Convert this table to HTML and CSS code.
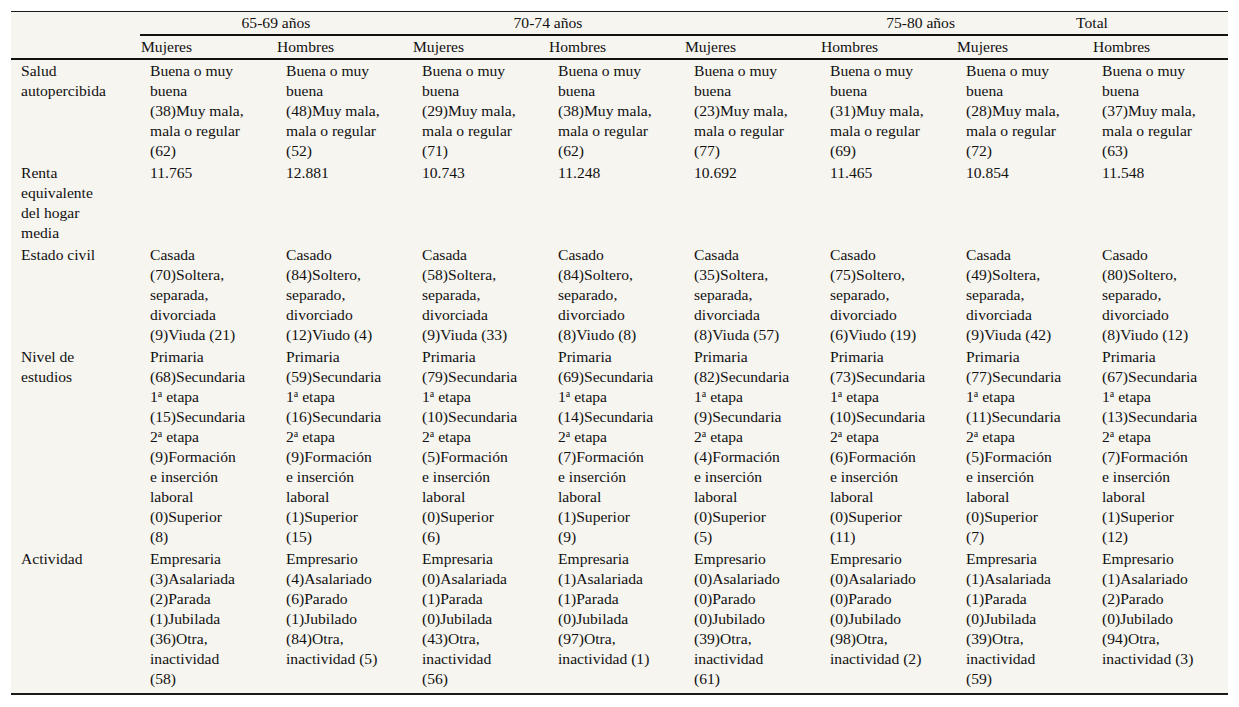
FILE: index.html
```html
<!DOCTYPE html>
<html lang="es">
<head>
<meta charset="utf-8">
<title>Tabla</title>
<link rel="stylesheet" href="styles.css">
</head>
<body>
<div class="page">
<table class="data">
<colgroup>
<col class="c-label">
<col class="c-data"><col class="c-data"><col class="c-data"><col class="c-data">
<col class="c-data"><col class="c-data"><col class="c-data"><col class="c-data">
</colgroup>
<thead>
<tr class="groups">
<th rowspan="2" class="corner"></th>
<th colspan="2" class="grp">65-69 años</th>
<th colspan="2" class="grp">70-74 años</th>
<th colspan="2" class="grp grp-right">75-80 años</th>
<th colspan="2" class="grp">Total</th>
</tr>
<tr class="subs">
<th>Mujeres</th><th>Hombres</th><th>Mujeres</th><th>Hombres</th>
<th>Mujeres</th><th>Hombres</th><th>Mujeres</th><th>Hombres</th>
</tr>
</thead>
<tbody>
<tr>
<td class="lbl">Salud<br>autopercibida</td>
<td>Buena o muy<br>buena<br>(38)Muy mala,<br>mala o regular<br>(62)</td>
<td>Buena o muy<br>buena<br>(48)Muy mala,<br>mala o regular<br>(52)</td>
<td>Buena o muy<br>buena<br>(29)Muy mala,<br>mala o regular<br>(71)</td>
<td>Buena o muy<br>buena<br>(38)Muy mala,<br>mala o regular<br>(62)</td>
<td>Buena o muy<br>buena<br>(23)Muy mala,<br>mala o regular<br>(77)</td>
<td>Buena o muy<br>buena<br>(31)Muy mala,<br>mala o regular<br>(69)</td>
<td>Buena o muy<br>buena<br>(28)Muy mala,<br>mala o regular<br>(72)</td>
<td>Buena o muy<br>buena<br>(37)Muy mala,<br>mala o regular<br>(63)</td>
</tr>
<tr>
<td class="lbl">Renta<br>equivalente<br>del hogar<br>media</td>
<td>11.765</td><td>12.881</td><td>10.743</td><td>11.248</td>
<td>10.692</td><td>11.465</td><td>10.854</td><td>11.548</td>
</tr>
<tr>
<td class="lbl">Estado civil</td>
<td>Casada<br>(70)Soltera,<br>separada,<br>divorciada<br>(9)Viuda (21)</td>
<td>Casado<br>(84)Soltero,<br>separado,<br>divorciado<br>(12)Viudo (4)</td>
<td>Casada<br>(58)Soltera,<br>separada,<br>divorciada<br>(9)Viuda (33)</td>
<td>Casado<br>(84)Soltero,<br>separado,<br>divorciado<br>(8)Viudo (8)</td>
<td>Casada<br>(35)Soltera,<br>separada,<br>divorciada<br>(8)Viuda (57)</td>
<td>Casado<br>(75)Soltero,<br>separado,<br>divorciado<br>(6)Viudo (19)</td>
<td>Casada<br>(49)Soltera,<br>separada,<br>divorciada<br>(9)Viuda (42)</td>
<td>Casado<br>(80)Soltero,<br>separado,<br>divorciado<br>(8)Viudo (12)</td>
</tr>
<tr>
<td class="lbl">Nivel de<br>estudios</td>
<td>Primaria<br>(68)Secundaria<br>1<sup>a</sup> etapa<br>(15)Secundaria<br>2<sup>a</sup> etapa<br>(9)Formación<br>e inserción<br>laboral<br>(0)Superior<br>(8)</td>
<td>Primaria<br>(59)Secundaria<br>1<sup>a</sup> etapa<br>(16)Secundaria<br>2<sup>a</sup> etapa<br>(9)Formación<br>e inserción<br>laboral<br>(1)Superior<br>(15)</td>
<td>Primaria<br>(79)Secundaria<br>1<sup>a</sup> etapa<br>(10)Secundaria<br>2<sup>a</sup> etapa<br>(5)Formación<br>e inserción<br>laboral<br>(0)Superior<br>(6)</td>
<td>Primaria<br>(69)Secundaria<br>1<sup>a</sup> etapa<br>(14)Secundaria<br>2<sup>a</sup> etapa<br>(7)Formación<br>e inserción<br>laboral<br>(1)Superior<br>(9)</td>
<td>Primaria<br>(82)Secundaria<br>1<sup>a</sup> etapa<br>(9)Secundaria<br>2<sup>a</sup> etapa<br>(4)Formación<br>e inserción<br>laboral<br>(0)Superior<br>(5)</td>
<td>Primaria<br>(73)Secundaria<br>1<sup>a</sup> etapa<br>(10)Secundaria<br>2<sup>a</sup> etapa<br>(6)Formación<br>e inserción<br>laboral<br>(0)Superior<br>(11)</td>
<td>Primaria<br>(77)Secundaria<br>1<sup>a</sup> etapa<br>(11)Secundaria<br>2<sup>a</sup> etapa<br>(5)Formación<br>e inserción<br>laboral<br>(0)Superior<br>(7)</td>
<td>Primaria<br>(67)Secundaria<br>1<sup>a</sup> etapa<br>(13)Secundaria<br>2<sup>a</sup> etapa<br>(7)Formación<br>e inserción<br>laboral<br>(1)Superior<br>(12)</td>
</tr>
<tr class="last">
<td class="lbl">Actividad</td>
<td>Empresaria<br>(3)Asalariada<br>(2)Parada<br>(1)Jubilada<br>(36)Otra,<br>inactividad<br>(58)</td>
<td>Empresario<br>(4)Asalariado<br>(6)Parado<br>(1)Jubilado<br>(84)Otra,<br>inactividad (5)</td>
<td>Empresaria<br>(0)Asalariada<br>(1)Parada<br>(0)Jubilada<br>(43)Otra,<br>inactividad<br>(56)</td>
<td>Empresaria<br>(1)Asalariada<br>(1)Parada<br>(0)Jubilada<br>(97)Otra,<br>inactividad (1)</td>
<td>Empresario<br>(0)Asalariado<br>(0)Parado<br>(0)Jubilado<br>(39)Otra,<br>inactividad<br>(61)</td>
<td>Empresario<br>(0)Asalariado<br>(0)Parado<br>(0)Jubilado<br>(98)Otra,<br>inactividad (2)</td>
<td>Empresaria<br>(1)Asalariada<br>(1)Parada<br>(0)Jubilada<br>(39)Otra,<br>inactividad<br>(59)</td>
<td>Empresario<br>(1)Asalariado<br>(2)Parado<br>(0)Jubilado<br>(94)Otra,<br>inactividad (3)</td>
</tr>
</tbody>
</table>
</div>
</body>
</html>
```
FILE: styles.css
```css
html, body {
  margin: 0;
  padding: 0;
  background: #ffffff;
}

.page {
  padding: 11px 11px 0 11px;
}

.data {
  width: 1217px;
  table-layout: fixed;
  border-collapse: collapse;
  background: #f7f5f0;
  color: #111111;
  font-family: "Liberation Serif", "Times New Roman", serif;
  font-size: 15.6px;
  line-height: 20px;
  border-top: 1px solid #1a1a1a;
  border-bottom: 2px solid #1a1a1a;
}

.data th,
.data td {
  font-family: "Liberation Serif", "Times New Roman", serif;
  font-size: 15.6px;
  line-height: 20px;
}

.c-label { width: 129px; }
.c-data { width: 136px; }

.data th {
  font-weight: normal;
  text-align: left;
  vertical-align: top;
  padding: 1px;
  height: 20px;
}

.groups .grp {
  text-align: center;
  border-bottom: 2px solid #111111;
}

.groups .grp-right {
  text-align: right;
}

.subs th {
  border-bottom: 2px solid #111111;
}

.corner {
  border-bottom: 2px solid #111111;
}

.data td {
  vertical-align: top;
  white-space: nowrap;
  padding: 1px 4px 1px 10px;
}

.last td {
  padding-bottom: 4px;
}

sup {
  font-size: 10px;
  line-height: 0;
  vertical-align: 5px;
}
```
